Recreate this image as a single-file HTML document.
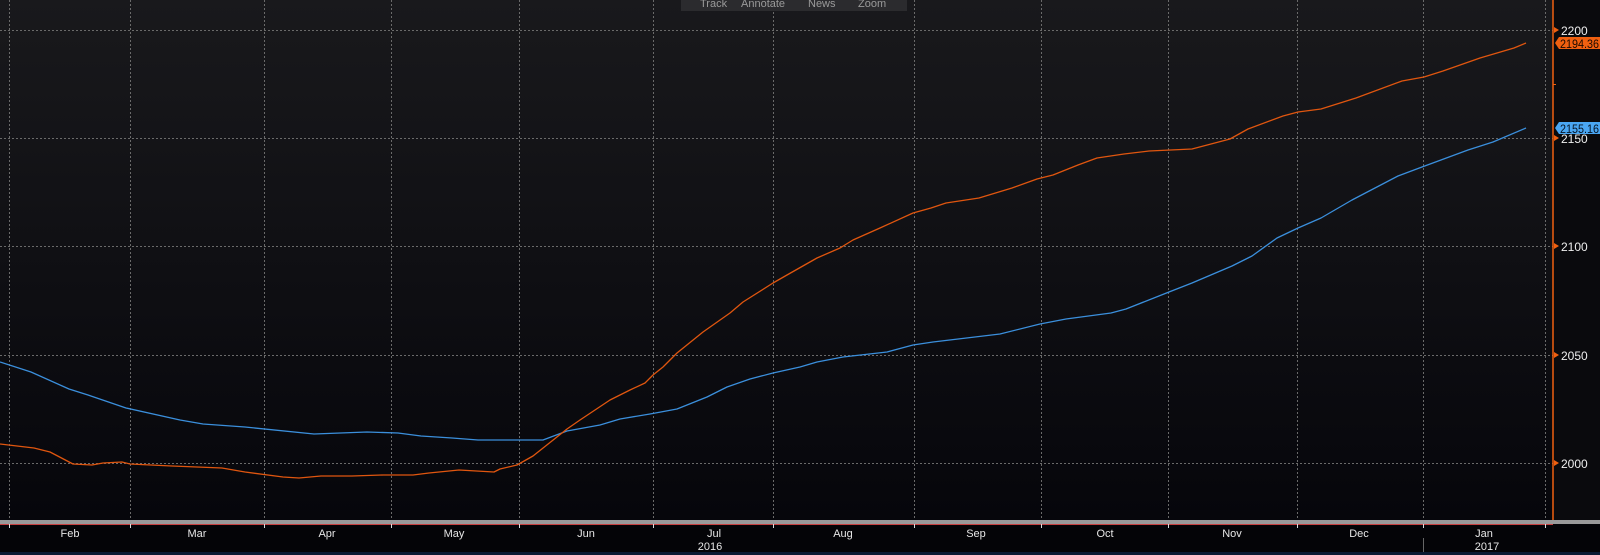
<!DOCTYPE html>
<html><head><meta charset="utf-8"><style>
html,body{margin:0;padding:0;background:#050508;width:1600px;height:555px;overflow:hidden}
svg{display:block}
text{font-family:"Liberation Sans",sans-serif}
</style></head><body>
<svg width="1600" height="555" viewBox="0 0 1600 555" xmlns="http://www.w3.org/2000/svg">
<defs><linearGradient id="bg" x1="0" y1="0" x2="0" y2="1">
<stop offset="0" stop-color="#19191c"/><stop offset="1" stop-color="#06060b"/></linearGradient></defs>
<rect x="0" y="0" width="1553" height="520" fill="url(#bg)"/>
<rect x="1553" y="0" width="47" height="520" fill="#0a0a0d"/>
<g stroke="#6a6a6a" stroke-width="1" stroke-dasharray="2,2" fill="none">
<line x1="0" y1="30.5" x2="1553" y2="30.5"/><line x1="0" y1="138.5" x2="1553" y2="138.5"/>
<line x1="0" y1="246.5" x2="1553" y2="246.5"/><line x1="0" y1="355.5" x2="1553" y2="355.5"/>
<line x1="0" y1="463.5" x2="1553" y2="463.5"/>
<line x1="9.5" y1="0" x2="9.5" y2="520"/><line x1="130.5" y1="0" x2="130.5" y2="520"/>
<line x1="264.5" y1="0" x2="264.5" y2="520"/><line x1="391.5" y1="0" x2="391.5" y2="520"/>
<line x1="519.5" y1="0" x2="519.5" y2="520"/><line x1="653.5" y1="0" x2="653.5" y2="520"/>
<line x1="773.5" y1="0" x2="773.5" y2="520"/><line x1="914.5" y1="0" x2="914.5" y2="520"/>
<line x1="1041.5" y1="0" x2="1041.5" y2="520"/><line x1="1168.5" y1="0" x2="1168.5" y2="520"/>
<line x1="1297.5" y1="0" x2="1297.5" y2="520"/><line x1="1423.5" y1="0" x2="1423.5" y2="520"/>
<line x1="1545.5" y1="0" x2="1545.5" y2="520"/>
</g>
<g fill="none" stroke-width="1.3" stroke-linejoin="round">
<polyline stroke="#3b8fdc" points="0,362 31,372 69,389 88,395 126,408 180,420 203,424 245,427 314,434 367,432 398,433 421,436 452,438 478,440 543,440 567,431 600,425 620,419 650,414 677,409 707,397 727,387 750,379 773,373 800,367 817,362 843,357 887,352 913,345 933,342 1000,334 1040,324 1066,319 1111,313 1126,309 1169,292 1192,283 1232,266 1252,256 1277,238 1298,228 1321,218 1352,200 1398,176 1422,167 1468,150 1493,142 1526,128"/>
<polyline stroke="#e0560f" points="0,444 34,448 50,452 73,464 92,465 103,463 122,462 130,464 172,466 222,468 245,472 283,477 299,478 321,476 352,476 383,475 413,475 429,473 459,470 494,472 500,469 517,465 533,456 567,429 580,420 610,400 630,390 645,383 653,375 663,367 677,353 703,332 730,313 743,302 773,283 787,275 817,258 840,248 853,240 880,228 913,213 931,208 946,203 979,198 1012,188 1037,179 1053,175 1078,165 1097,158 1124,154 1149,151 1192,149 1230,139 1248,129 1283,116 1298,112 1321,109 1356,98 1402,81 1424,77 1443,71 1480,58 1514,48 1526,43"/>
</g>
<rect x="681" y="0" width="226" height="11" fill="#2b2b2e"/>
<g fill="#9a9a9a" font-size="11"><text x="700" y="7">Track</text><text x="741" y="7">Annotate</text><text x="808" y="7">News</text><text x="858" y="7">Zoom</text></g>
<line x1="1553" y1="0" x2="1553" y2="520" stroke="#f06010" stroke-width="1.5"/>
<g fill="#f06010"><path d="M1554,27 l5,3 l-5,3z"/><path d="M1554,135 l5,3 l-5,3z"/><path d="M1554,243 l5,3 l-5,3z"/><path d="M1554,352 l5,3 l-5,3z"/><path d="M1554,460 l5,3 l-5,3z"/><rect x="1553" y="84" width="3" height="1"/></g>
<g fill="#eee" font-size="12"><text x="1561" y="35">2200</text><text x="1561" y="143">2150</text><text x="1561" y="251">2100</text><text x="1561" y="360">2050</text><text x="1561" y="468">2000</text></g>
<path d="M1555,43 l4,-6 h41 v12 h-41z" fill="#f06010"/>
<text x="1560" y="48" font-size="12" fill="#1a0a00" textLength="39" lengthAdjust="spacingAndGlyphs">2194.36</text>
<path d="M1555,128 l4,-6 h41 v12 h-41z" fill="#4aa6f2"/>
<text x="1560" y="133" font-size="12" fill="#061526" textLength="39" lengthAdjust="spacingAndGlyphs">2155.16</text>
<rect x="0" y="520" width="1600" height="4" fill="#9a9a9a"/>
<rect x="0" y="524" width="1553" height="1" fill="#c84040"/>
<rect x="0" y="525" width="1600" height="27" fill="#040407"/>
<g stroke="#ddd"><line x1="9.5" y1="524" x2="9.5" y2="528"/><line x1="130.5" y1="524" x2="130.5" y2="528"/><line x1="264.5" y1="524" x2="264.5" y2="528"/><line x1="391.5" y1="524" x2="391.5" y2="528"/><line x1="519.5" y1="524" x2="519.5" y2="528"/><line x1="653.5" y1="524" x2="653.5" y2="528"/><line x1="773.5" y1="524" x2="773.5" y2="528"/><line x1="914.5" y1="524" x2="914.5" y2="528"/><line x1="1041.5" y1="524" x2="1041.5" y2="528"/><line x1="1168.5" y1="524" x2="1168.5" y2="528"/><line x1="1297.5" y1="524" x2="1297.5" y2="528"/><line x1="1423.5" y1="524" x2="1423.5" y2="528"/><line x1="1545.5" y1="524" x2="1545.5" y2="528"/></g>
<line x1="1423.5" y1="538" x2="1423.5" y2="552" stroke="#666"/>
<g fill="#e6e6e6" font-size="11" text-anchor="middle">
<text x="70" y="537">Feb</text><text x="197" y="537">Mar</text><text x="327" y="537">Apr</text><text x="454" y="537">May</text><text x="586" y="537">Jun</text><text x="714" y="537">Jul</text><text x="843" y="537">Aug</text><text x="976" y="537">Sep</text><text x="1105" y="537">Oct</text><text x="1232" y="537">Nov</text><text x="1359" y="537">Dec</text><text x="1484" y="537">Jan</text>
<text x="710" y="550">2016</text><text x="1487" y="550">2017</text></g>
<rect x="0" y="552" width="1600" height="3" fill="#0a1a33"/>
</svg>
</body></html>
